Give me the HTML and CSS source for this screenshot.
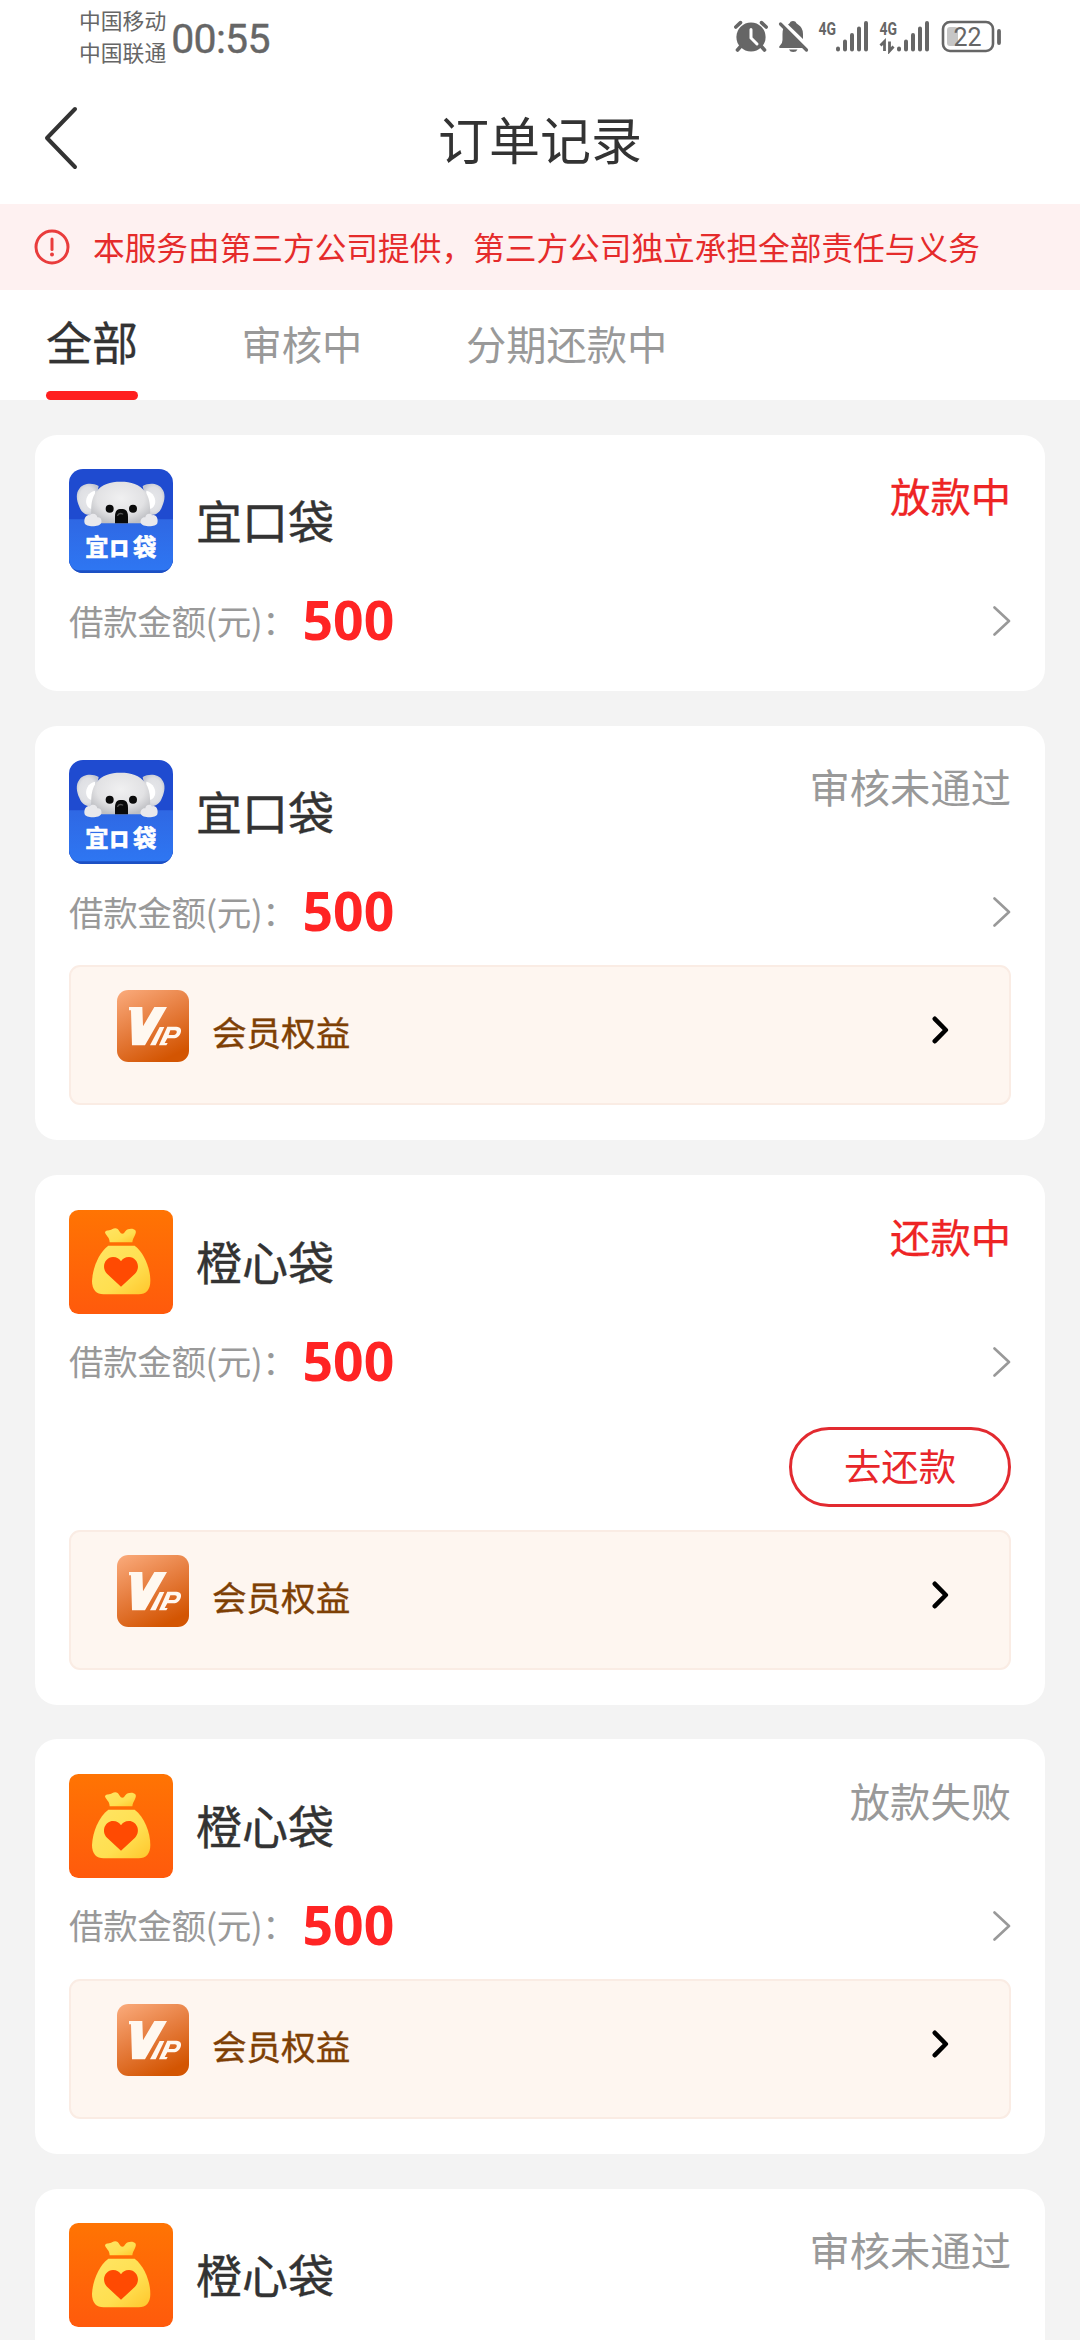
FILE: index.html
```html
<!DOCTYPE html>
<html lang="zh-CN">
<head>
<meta charset="utf-8">
<title>订单记录</title>
<link rel="stylesheet" href="styles.css">
</head>
<body>
<svg class="defs" width="0" height="0" aria-hidden="true">
  <defs>
    <linearGradient id="g-front" x1="0" y1="0" x2="0" y2="1"><stop offset="0" stop-color="#2f68e4"/><stop offset="1" stop-color="#2e76f2"/></linearGradient>
    <radialGradient id="g-head" cx=".5" cy=".4" r=".62"><stop offset="0" stop-color="#f0f0f1"/><stop offset=".65" stop-color="#e2e2e4"/><stop offset="1" stop-color="#bfc0c4"/></radialGradient>
    <radialGradient id="g-ear" cx=".5" cy=".5" r=".55"><stop offset="0" stop-color="#e6e7ea"/><stop offset=".7" stop-color="#dfe0e4"/><stop offset="1" stop-color="#c3c7d2"/></radialGradient>
    <linearGradient id="g-orange" x1="0" y1="0" x2="0" y2="1"><stop offset="0" stop-color="#ff7403"/><stop offset="1" stop-color="#ff5a0c"/></linearGradient>
    <linearGradient id="g-bag" x1="0" y1="0" x2="1" y2="1"><stop offset="0" stop-color="#ffe564"/><stop offset=".6" stop-color="#ffdf50"/><stop offset="1" stop-color="#ffc62c"/></linearGradient>
    <linearGradient id="g-vip" x1=".1" y1="0" x2=".6" y2="1"><stop offset="0" stop-color="#f9a878"/><stop offset=".5" stop-color="#e67d3e"/><stop offset="1" stop-color="#d35502"/></linearGradient>
    <clipPath id="c-logo"><rect x="27" y="27" width="312" height="312" rx="42"/></clipPath>
  </defs>
  <symbol id="koala" viewBox="27 27 312 312">
    <g clip-path="url(#c-logo)">
      <rect x="27" y="27" width="312" height="312" fill="#1f4bd0"/>
      <path d="M27 180H339V339H27Z" fill="#1c50c4"/>
      <path d="M27 178H339V296Q339 331 304 331H62Q27 331 27 296Z" fill="url(#g-front)"/>
      <path d="M116 78C96 66 68 70 58 86C46 100 50 124 58 140C64 158 78 168 98 164Z" fill="url(#g-ear)"/>
      <path d="M248 78C268 66 296 70 306 86C318 100 314 124 306 140C300 158 286 168 266 164Z" fill="url(#g-ear)"/>
      <path d="M105 92C84 96 74 118 80 134C84 144 94 150 104 146Z" fill="#fff"/>
      <path d="M259 92C280 96 290 118 284 134C280 144 270 150 260 146Z" fill="#fff"/>
      <path d="M96 190C94 166 88 122 108 96C126 72 150 65 182 65C214 65 238 72 256 96C276 122 270 166 268 190Z" fill="url(#g-head)"/>
      <path d="M74 190C70 176 80 162 90 166C98 156 112 164 112 172C122 170 126 180 124 188C120 202 78 202 74 190Z" fill="#e9e9ec"/>
      <path d="M242 188C240 178 248 170 256 172C256 164 268 156 276 166C288 162 296 176 292 190C288 202 246 202 242 188Z" fill="#e9e9ec"/>
      <circle cx="149" cy="146" r="12" fill="#0b0b0b"/><circle cx="219" cy="146" r="12" fill="#0b0b0b"/>
      <path d="M165 190V170C165 152 172 147 184 147C196 147 204 152 204 170V190Z" fill="#0a0a0a"/>
      <path d="M173 166Q178 158 188 162" stroke="#555" stroke-width="4" fill="none" stroke-linecap="round"/>
    </g>
  </symbol>
  <symbol id="bag" viewBox="27 27 312 312">
    <rect x="27" y="27" width="312" height="312" rx="28" fill="url(#g-orange)"/>
    <path d="M149 124C149 108 136 103 135 94C137 86 150 90 156 85C167 79 174 83 178 91C184 101 190 101 196 91C204 81 221 82 226 88C232 98 219 108 217 124Z" fill="url(#g-bag)"/>
    <path d="M145 134H224C253 156 271 202 271 240C271 266 258 280 236 280H131C109 280 96 266 96 240C98 200 116 156 145 134Z" fill="url(#g-bag)"/>
    <path d="M183 257L141 218C122 198 136 168 159 168C171 168 178 173 183 181C188 173 195 168 207 168C230 168 244 198 225 218Z" fill="#ff4a02"/>
  </symbol>
  <symbol id="vip" viewBox="51 45 216 216">
    <rect x="51" y="45" width="216" height="216" rx="34" fill="url(#g-vip)"/>
    <path d="M87 96H127L129 154L163 96H201L135 211H96L93 106H87Z" fill="#fff8f0"/>
    <path d="M179 156H193L167 211H150Z" fill="#fff8f0"/>
    <path fill-rule="evenodd" d="M202 155H229C243 155 246 166 241 176C236 187 228 190 216 190H202L194 204H203L199 211H177ZM211 166L206 180H218C225 180 228 177 230 173C231 168 229 166 224 166Z" fill="#fff8f0"/>
  </symbol>
  <symbol id="arrow" viewBox="0 0 18 30"><path d="M1.5 1.5L16 15L1.5 28.5" fill="none" stroke="currentColor" stroke-width="2.6" stroke-linecap="round" stroke-linejoin="round"/></symbol>
  <symbol id="arrow-bold" viewBox="0 0 17 28"><path d="M2.8 2.8L13.8 14L2.8 25.2" fill="none" stroke="currentColor" stroke-width="4.6" stroke-linecap="round" stroke-linejoin="round"/></symbol>
</svg>

<div class="screen">
  <header class="status-bar">
    <div class="carriers"><span>中国移动</span><span>中国联通</span></div>
    <div class="clock">00:55</div>
    <svg class="status-icons" viewBox="734 18 268 36" fill="#666">
      <circle cx="751" cy="37" r="14.6"/>
      <path d="M735.8 27L740.5 22.6M766.2 27L761.5 22.6M741 46L737.5 50M761 46L764.5 50" stroke="#666" stroke-width="3.6" stroke-linecap="round"/>
      <path d="M751 29.5V38L757 44" fill="none" stroke="#fff" stroke-width="3" stroke-linecap="round"/>
      <path d="M788 24.5Q790 23.5 790.5 21.8Q793 20 795.5 21.8Q796 23.5 798 24.5Q803 27.5 803 34V39Z"/>
      <path d="M783.5 28L803 48H779.5Q778.5 46.5 780 45.5Q782.5 43.5 782.5 40V34Q782.5 30.5 783.5 28Z"/>
      <path d="M789 49.5H797.5Q796.5 52 793.2 52Q790 52 789 49.5Z"/>
      <path d="M780.5 24L806.5 50" stroke="#666" stroke-width="3.2" stroke-linecap="round"/>
      <text class="net" x="818.5" y="34.5" textLength="17.5" lengthAdjust="spacingAndGlyphs">4G</text>
      <path d="M838 48.5V49.5M845 41.5V49.5M852 35V49.5M859 28.5V49.5M866 23V49.5" stroke="#666" stroke-width="4" stroke-linecap="round"/>
      <text class="net" x="879.5" y="34.5" textLength="17.5" lengthAdjust="spacingAndGlyphs">4G</text>
      <path d="M880.5 45.5L884.5 41.5V51M889.5 41.5V51L893.5 46.5" fill="none" stroke="#666" stroke-width="2.8"/>
      <path d="M899 48.5V49.5M906 41.5V49.5M913 35V49.5M920 28.5V49.5M927 23V49.5" stroke="#666" stroke-width="4" stroke-linecap="round"/>
      <rect x="947" y="27" width="11" height="19" rx="3" fill="#c6c6c6"/>
      <rect x="943" y="22" width="50" height="29" rx="7" fill="none" stroke="#666" stroke-width="2.6"/>
      <path d="M999 31V43" stroke="#666" stroke-width="3.8" stroke-linecap="round"/>
      <text class="battery" x="967.5" y="45.5" text-anchor="middle">22</text>
    </svg>
  </header>

  <nav class="title-bar">
    <svg class="back" viewBox="0 0 34 64"><path d="M31 3L3 32L31 61" fill="none" stroke="#333" stroke-width="4" stroke-linecap="round" stroke-linejoin="round"/></svg>
    <h1 class="title">订单记录</h1>
  </nav>

  <div class="notice">
    <svg class="notice-icon" viewBox="0 0 36 36"><circle cx="18" cy="18" r="16" fill="none" stroke="#e93c3c" stroke-width="3"/><path d="M18 10V20.5" stroke="#e93c3c" stroke-width="3" stroke-linecap="round"/><circle cx="18" cy="25.5" r="2" fill="#e93c3c"/></svg>
    <span class="notice-text">本服务由第三方公司提供，第三方公司独立承担全部责任与义务</span>
  </div>

  <div class="tabs">
    <div class="tab tab-active">全部</div>
    <div class="tab">审核中</div>
    <div class="tab">分期还款中</div>
  </div>

  <main class="orders">
    <section class="card">
      <div class="card-head"><svg class="logo" viewBox="27 27 312 312"><use href="#koala" x="27" y="27" width="312" height="312"/><text class="logo-text" x="76" y="289">宜</text><text class="logo-text logo-text-mid" x="151" y="284">口</text><text class="logo-text" x="219" y="289">袋</text></svg><span class="name">宜口袋</span><span class="status status-live">放款中</span></div>
      <div class="amount-row"><span class="label">借款金额(元)：</span><span class="amount">500</span><svg class="arrow"><use href="#arrow"/></svg></div>
    </section>

    <section class="card">
      <div class="card-head"><svg class="logo" viewBox="27 27 312 312"><use href="#koala" x="27" y="27" width="312" height="312"/><text class="logo-text" x="76" y="289">宜</text><text class="logo-text logo-text-mid" x="151" y="284">口</text><text class="logo-text" x="219" y="289">袋</text></svg><span class="name">宜口袋</span><span class="status">审核未通过</span></div>
      <div class="amount-row"><span class="label">借款金额(元)：</span><span class="amount">500</span><svg class="arrow"><use href="#arrow"/></svg></div>
      <div class="benefit"><svg class="vip"><use href="#vip"/></svg><span class="benefit-text">会员权益</span><svg class="benefit-arrow"><use href="#arrow-bold"/></svg></div>
    </section>

    <section class="card">
      <div class="card-head"><svg class="logo"><use href="#bag"/></svg><span class="name">橙心袋</span><span class="status status-live">还款中</span></div>
      <div class="amount-row"><span class="label">借款金额(元)：</span><span class="amount">500</span><svg class="arrow"><use href="#arrow"/></svg></div>
      <div class="actions"><button class="repay">去还款</button></div>
      <div class="benefit"><svg class="vip"><use href="#vip"/></svg><span class="benefit-text">会员权益</span><svg class="benefit-arrow"><use href="#arrow-bold"/></svg></div>
    </section>

    <section class="card">
      <div class="card-head"><svg class="logo"><use href="#bag"/></svg><span class="name">橙心袋</span><span class="status">放款失败</span></div>
      <div class="amount-row"><span class="label">借款金额(元)：</span><span class="amount">500</span><svg class="arrow"><use href="#arrow"/></svg></div>
      <div class="benefit"><svg class="vip"><use href="#vip"/></svg><span class="benefit-text">会员权益</span><svg class="benefit-arrow"><use href="#arrow-bold"/></svg></div>
    </section>

    <section class="card">
      <div class="card-head"><svg class="logo"><use href="#bag"/></svg><span class="name">橙心袋</span><span class="status">审核未通过</span></div>
    </section>
  </main>
</div>
</body>
</html>
```

FILE: styles.css
```css
* { box-sizing: border-box; }

body {
  margin: 0;
  background: #f3f3f3;
  color: #333;
  font-family: "Noto Sans CJK SC", "Noto Sans", sans-serif;
}

.defs { display: block; }

.screen {
  display: flex;
  flex-direction: column;
  width: 1080px;
  height: 2340px;
  overflow: hidden;
}

.status-bar {
  display: flex;
  align-items: center;
  flex: none;
  height: 75px;
  padding: 0 78px 0 79px;
  background: #fff;
  color: #666;
}

.carriers {
  display: flex;
  flex-direction: column;
  margin-top: -3px;
  font-size: 21.8px;
  line-height: 32px;
}

.clock {
  margin: 2px 0 0 5px;
  font-family: Roboto, sans-serif;
  font-size: 41px;
  letter-spacing: -0.7px;
  line-height: 48px;
  -webkit-text-stroke: 0.4px currentColor;
}

.status-icons {
  width: 268px;
  height: 36px;
  margin: -3px 0 0 auto;
}

.net { font: 700 18px Roboto, sans-serif; }
.battery { font: 400 25px Roboto, sans-serif; }

.title-bar {
  display: grid;
  grid-template-columns: 120px 1fr 120px;
  align-items: center;
  flex: none;
  height: 129px;
  background: #fff;
}

.back {
  width: 34px;
  height: 64px;
  margin: -3px 0 0 44px;
}

.title {
  margin: 0;
  padding-bottom: 4px;
  font-size: 51px;
  font-weight: 400;
  line-height: 72px;
  text-align: center;
}

.notice {
  display: flex;
  align-items: center;
  gap: 23px;
  flex: none;
  height: 86px;
  padding-left: 34px;
  background: #fef1f1;
  color: #e52b2b;
}

.notice-icon { width: 36px; height: 36px; }

.notice-text {
  padding-bottom: 2px;
  font-size: 31.68px;
  line-height: 46px;
}

.tabs {
  display: flex;
  gap: 103.5px;
  flex: none;
  height: 110px;
  padding-left: 46px;
  background: #fff;
}

.tab {
  height: 110px;
  color: #999;
  font-size: 40.3px;
  line-height: 106px;
}

.tab-active {
  display: flex;
  flex-direction: column;
  color: #333;
  font-size: 46px;
  line-height: 101px;
  -webkit-text-stroke: 0.3px currentColor;
}

.tab-active::after {
  content: "";
  flex: none;
  height: 9px;
  border-radius: 4.5px;
  background: #ff1f1f;
}

.orders {
  display: flex;
  flex-direction: column;
  gap: 34.6px;
  padding: 34.5px 35px;
}

.card {
  flex: none;
  padding: 34.5px 34px 35.2px;
  border-radius: 22px;
  background: #fff;
}

.card-head {
  display: flex;
  align-items: center;
  height: 104px;
}

.logo { width: 104px; height: 104px; }

.logo-text {
  fill: #fff;
  stroke: #fff;
  stroke-width: 2px;
  font-size: 70px;
  font-weight: 700;
}

.logo-text-mid {
  stroke-width: 5px;
  font-size: 54px;
}

.name {
  margin-left: 23px;
  padding-bottom: 4px;
  font-size: 46px;
  line-height: 60px;
  -webkit-text-stroke: 0.4px currentColor;
}

.status {
  align-self: flex-start;
  margin-top: -2px;
  margin-left: auto;
  color: #999;
  font-size: 40.3px;
  line-height: 56px;
}

.status-live {
  color: #ee2424;
  -webkit-text-stroke: 0.3px currentColor;
}

.amount-row {
  display: flex;
  align-items: center;
  height: 83px;
  padding-top: 13px;
}

.label {
  padding-bottom: 3px;
  color: #999;
  font-size: 34.56px;
  letter-spacing: -0.4px;
  line-height: 50px;
}

.amount {
  margin-left: 6px;
  padding-bottom: 2px;
  color: #ff2424;
  font-family: "Noto Sans", sans-serif;
  font-size: 53.5px;
  font-weight: 700;
  line-height: 56px;
}

.arrow {
  width: 18px;
  height: 30px;
  margin-left: auto;
  color: #999;
}

.actions {
  display: flex;
  justify-content: flex-end;
  padding: 30px 0 5px;
}

.repay {
  width: 222px;
  height: 80px;
  padding: 0 0 4px;
  border: 3px solid #e22a30;
  border-radius: 40px;
  background: #fff;
  color: #e8262a;
  font-family: inherit;
  font-size: 37.4px;
  line-height: 70px;
}

.benefit {
  display: flex;
  align-items: flex-start;
  height: 140px;
  margin-top: 18px;
  padding: 23px 60px 0 46px;
  border: 2px solid #faece4;
  border-radius: 11px;
  background: #fef6f0;
}

.vip { width: 72px; height: 72px; }

.benefit-text {
  margin: 16px 0 0 23px;
  color: #7e4005;
  font-size: 34.56px;
  line-height: 50px;
  -webkit-text-stroke: 0.4px currentColor;
}

.benefit-arrow {
  width: 17px;
  height: 28px;
  margin: 26px 0 0 auto;
  color: #000;
}
```
